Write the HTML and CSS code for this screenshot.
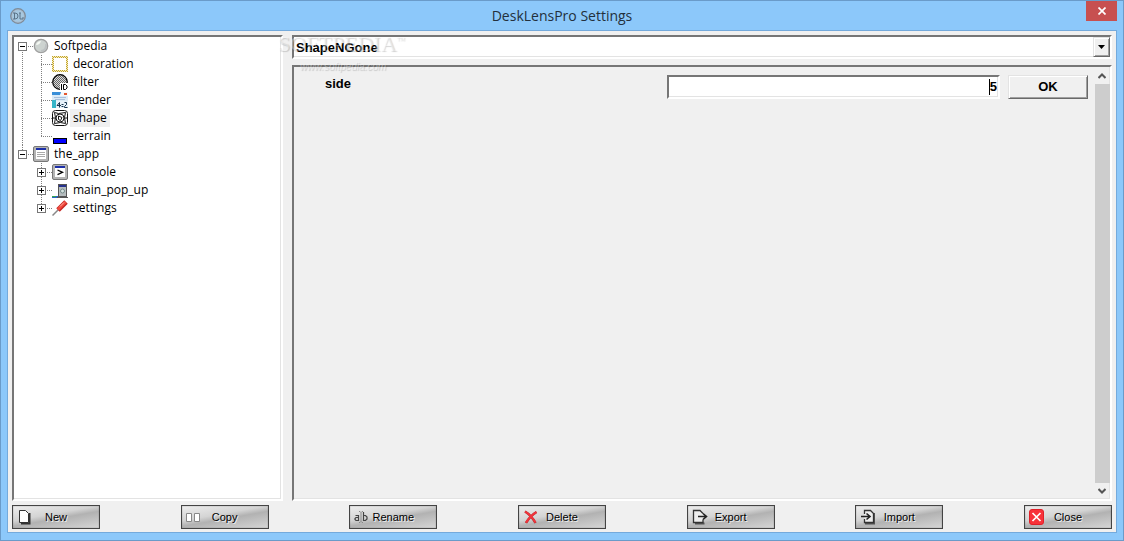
FILE: index.html
```html
<!DOCTYPE html>
<html lang="en">
<head>
  <meta charset="UTF-8">
  <title>DeskLensPro Settings</title>
  <link rel="stylesheet" href="styles.css">
</head>
<body>

  <div class="window">
    <header class="titlebar">
      <svg class="app-icon" viewBox="0 0 16 16">
        <circle cx="8" cy="8" r="7.3" fill="#a9bdd0" stroke="#7e8b98" stroke-width="1.3"/>
        <circle cx="8" cy="8" r="5.8" fill="#a6c8e0"/>
        <path d="M3 5h2q3 0 3 3t-3 3H3M4.500 5v6M9 5h2M10 5v6h3v-2" fill="none" stroke="#5b7388"/>
      </svg>
      <h1>DeskLensPro Settings</h1>
      <button class="window-close" type="button" aria-label="Close window">
        <svg width="8" height="8" viewBox="0 0 8 8"><path d="M0.500 0.500l7 7M7.500 0.500l-7 7" stroke="#fff" stroke-width="1.7"/></svg>
      </button>
    </header>

    <main class="client">
      <div class="panes">
        <nav class="tree sunken">
          <ul>
            <li>
              <div class="row">
                <span class="joint"><button class="expander open" type="button" aria-label="Collapse Softpedia"></button></span>
                <svg class="icon" viewBox="0 0 16 16">
                  <circle cx="8" cy="8" r="6.700" fill="#cdd3d0" stroke="#a0a0a0" stroke-width="1.300"/>
                  <path d="M3 7q1-4 5-4-1 4-5 4" fill="#f4f8f2"/>
                  <path d="M13 6q1 6-5 7" fill="none" stroke="#bdc1c2" stroke-width="2"/>
                </svg>
                <span class="name">Softpedia</span>
              </div>
              <ul>
                <li>
                  <div class="row">
                    <span class="joint"></span>
                    <svg class="icon" viewBox="0 0 16 16" shape-rendering="crispEdges">
                      <defs>
                        <pattern id="checker" width="2" height="2" patternUnits="userSpaceOnUse">
                          <path d="M0 0h2v2H0z" fill="#f6ecc0"/>
                          <path d="M0 0h1v1H0zM1 1h1v1H1z" fill="#c3a52c"/>
                        </pattern>
                      </defs>
                      <path d="M0 0h16v16H0z" fill="url(#checker)"/>
                      <path d="M2 2h12v12H2z" fill="#fff"/>
                    </svg>
                    <span class="name">decoration</span>
                  </div>
                </li>
                <li>
                  <div class="row">
                    <span class="joint"></span>
                    <svg class="icon" viewBox="0 0 16 16">
                      <defs>
                        <pattern id="dither" width="2" height="2" patternUnits="userSpaceOnUse">
                          <path d="M0 0h2v2H0z" fill="#ddd"/>
                          <path d="M0 0h1v1H0zM1 1h1v1H1z" fill="#666" shape-rendering="crispEdges"/>
                        </pattern>
                      </defs>
                      <circle cx="8" cy="8" r="7.300" fill="url(#dither)" stroke="#000" stroke-width="1.200"/>
                      <path d="M8 9h8v7H8z" fill="#fff"/>
                      <path d="M9.500 10v6M11.500 10.500h2l1.500 1.500v2l-1.500 1.500h-2z" fill="none" stroke="#000"/>
                    </svg>
                    <span class="name">filter</span>
                  </div>
                </li>
                <li>
                  <div class="row">
                    <span class="joint"></span>
                    <svg class="icon" viewBox="0 0 16 16">
                      <path d="M0 0h16v16H0z" fill="#dcebf7"/>
                      <path d="M0 0h10l-2 3H0z" fill="#3a8fd8"/>
                      <path d="M9 0h7v4h-8z" fill="#f5f9fc"/>
                      <path d="M12 1h3v2h-3z" fill="#e4572f"/>
                      <path d="M2 5.500h12M3 7.500h10" stroke="#a9c0dc"/>
                      <path d="M0 8h4v8H0z" fill="#35b5c9"/>
                      <path d="M4 9h12v7H4z" fill="#e8f2fa"/>
                      <path d="M7.500 15.500v-5l-2.500 3h4M9.500 12.500h2M9.500 14.500h2M12.500 10.500h2v2l-2 2v1h3" fill="none" stroke="#15334d"/>
                    </svg>
                    <span class="name">render</span>
                  </div>
                </li>
                <li>
                  <div class="row">
                    <span class="joint"></span>
                    <svg class="icon" viewBox="0 0 16 16" fill="none" stroke="#111">
                      <rect x="0.500" y="0.500" width="15" height="15" rx="3"/>
                      <path d="M2.500 2.500l4 1 7-1-1 5 1 6-5-1-6 1 1-6z"/>
                      <circle cx="8" cy="8" r="4"/>
                      <path d="M6.500 6l3.500 1.500-1.500 3-2-1zM0.500 8h3M12.500 8h3"/>
                    </svg>
                    <span class="name selected">shape</span>
                  </div>
                </li>
                <li>
                  <div class="row">
                    <span class="joint"></span>
                    <svg class="icon" viewBox="0 0 16 16">
                      <rect x="1.500" y="10.500" width="13" height="5" fill="#00f" stroke="#000"/>
                    </svg>
                    <span class="name">terrain</span>
                  </div>
                </li>
              </ul>
            </li>
            <li>
              <div class="row">
                <span class="joint"><button class="expander open" type="button" aria-label="Collapse the_app"></button></span>
                <svg class="icon" viewBox="0 0 16 16">
                  <rect x="0.500" y="0.500" width="15" height="15" rx="1.500" fill="#b4b4b4" stroke="#777"/>
                  <path d="M3 3h10v10H3z" fill="#fff"/>
                  <path d="M3 2h10v2H3z" fill="#1c2fa8"/>
                  <path d="M4 6.500h8M4 8.500h8M4 10.500h8" stroke="#aaa"/>
                </svg>
                <span class="name">the_app</span>
              </div>
              <ul>
                <li>
                  <div class="row">
                    <span class="joint"><button class="expander" type="button" aria-label="Expand console"></button></span>
                    <svg class="icon" viewBox="0 0 16 16">
                      <rect x="0.500" y="0.500" width="15" height="15" rx="1.500" fill="#b4b4b4" stroke="#777"/>
                      <path d="M3 3h10v10H3z" fill="#fff"/>
                      <path d="M3 2h10v2H3z" fill="#1c2fa8"/>
                      <path d="M5.500 6l5 2.300-5 2.300" fill="none" stroke="#000" stroke-width="1.300"/>
                    </svg>
                    <span class="name">console</span>
                  </div>
                </li>
                <li>
                  <div class="row">
                    <span class="joint"><button class="expander" type="button" aria-label="Expand main_pop_up"></button></span>
                    <svg class="icon" viewBox="0 0 16 16">
                      <path d="M0 14h8v2H0z" fill="#2a64c8"/>
                      <path d="M0 14.500h4" stroke="#37a84a"/>
                      <rect x="6.500" y="2.500" width="8" height="12" fill="#b5bcbe" stroke="#555"/>
                      <path d="M7 3h7v2H7z" fill="#26318c"/>
                      <circle cx="10.500" cy="9" r="2" fill="#d5e2e0" stroke="#738888"/>
                      <path d="M5 15.500h11" stroke="#555"/>
                    </svg>
                    <span class="name">main_pop_up</span>
                  </div>
                </li>
                <li>
                  <div class="row">
                    <span class="joint"><button class="expander" type="button" aria-label="Expand settings"></button></span>
                    <svg class="icon" viewBox="0 0 16 16">
                      <path d="M0.500 15.500L8 8" stroke="#888" stroke-width="1.500"/>
                      <path d="M6 10L14 2" stroke="#c42420" stroke-width="5"/>
                      <path d="M6 9.500L13.500 2" stroke="#f04a3e" stroke-width="3"/>
                      <path d="M8 6.500l4-4" stroke="#ffb0a4"/>
                    </svg>
                    <span class="name">settings</span>
                  </div>
                </li>
              </ul>
            </li>
          </ul>
        </nav>

        <section class="editor">
          <div class="combo sunken">
            <select aria-label="Shape type">
              <option>ShapeNGone</option>
            </select>
            <span class="combo-arrow"><svg width="7" height="4" viewBox="0 0 7 4"><path d="M0 0h7L3.500 4z"/></svg></span>
          </div>

          <div class="properties sunken">
            <form class="fields">
              <label for="side">side</label>
              <input class="sunken" type="text" id="side" value="5">
              <button class="ok" type="button">OK</button>
            </form>
            <div class="scrollbar">
              <svg width="8" height="6" viewBox="0 0 8 6"><path d="M0.500 5L4 1.500 7.500 5" fill="none" stroke="#555" stroke-width="2"/></svg>
              <div class="thumb"></div>
              <svg width="8" height="6" viewBox="0 0 8 6"><path d="M0.500 1L4 4.500 7.500 1" fill="none" stroke="#555" stroke-width="2"/></svg>
            </div>
          </div>

          <div class="watermark" aria-hidden="true">
            <span class="brand">SOFTPEDIA<sup>™</sup></span>
            <span class="site">www.softpedia.com</span>
          </div>
        </section>
      </div>

      <footer class="toolbar">
        <button type="button">
          <svg viewBox="0 0 16 16"><path d="M4 14.500h8.500V4" fill="none" stroke="#333" stroke-width="2"/><path d="M2.500 1.500h6l3 3v9h-9z" fill="#fff" stroke="#333"/></svg>
          <span>New</span>
        </button>
        <button type="button">
          <svg viewBox="0 0 16 16"><path d="M0.500 4.500h5v8h-5zM8.500 4.500h5v8h-5z" fill="#fff" stroke="#888"/></svg>
          <span>Copy</span>
        </button>
        <button type="button">
          <svg viewBox="0 0 16 16" fill="none" stroke="#444" stroke-width="1.200"><path d="M1.500 6.500h3V12M4 8.500H2L1 9.500v1l1 1h2.500M9.500 3v9M9.500 6.500h2l1.500 1.500v2l-1.500 1.500h-2"/><path d="M5 2.500h1l1 1 1-1h1M7 3.500v9M5 13.500h1l1-1 1 1h1" stroke="#888" stroke-width="1"/></svg>
          <span>Rename</span>
        </button>
        <button type="button">
          <svg viewBox="0 0 16 16"><path d="M2 2.500Q8 6 12.500 14M13.500 3Q7 7 3 14" fill="none" stroke="#b03030" stroke-width="2.500"/><path d="M2 2.500Q8 6 12.500 13.500M13.500 3Q7 7 3 13.500" fill="none" stroke="#f0343c" stroke-width="2"/></svg>
          <span>Delete</span>
        </button>
        <button type="button">
          <svg viewBox="0 0 16 16"><path d="M3 14.500h9.500" stroke="#555" stroke-width="2"/><path d="M11 4.500l-3-3H1.500v12h9.500v-3" fill="#eee" stroke="#333" stroke-width="1.300"/><path d="M6 7.500h8M11 4.500l3.500 3-3.500 3" fill="none" stroke="#222" stroke-width="1.600"/></svg>
          <span>Export</span>
        </button>
        <button type="button">
          <svg viewBox="0 0 16 16"><path d="M5 14.500h9V4" fill="none" stroke="#555" stroke-width="2"/><path d="M4.500 5V1.500h6l3 3v9h-9V10" fill="#eee" stroke="#333" stroke-width="1.300"/><path d="M1 7.500h8M6.500 4.500l3.500 3-3.500 3" fill="none" stroke="#222" stroke-width="1.600"/></svg>
          <span>Import</span>
        </button>
        <button type="button">
          <svg viewBox="0 0 16 16"><rect x="0.500" y="0.500" width="14" height="15" rx="2.500" fill="#f8323a" stroke="#e02028"/><path d="M3.500 4l8 8M11.500 4l-8 8" stroke="#fff" stroke-width="1.700"/></svg>
          <span>Close</span>
        </button>
      </footer>
    </main>
  </div>

</body>
</html>
```

FILE: styles.css
```css
* {
  box-sizing: border-box;
}
body {
  margin: 0;
  font-family: "Liberation Sans", Arial, sans-serif;
  font-size: 13px;
  color: #000;
}
button {
  padding: 0;
  font-family: inherit;
  color: inherit;
}
.window {
  display: flex;
  flex-direction: column;
  height: 100vh;
  padding: 0 6px 7px;
  background: #8cc8fa;
  border: 1px solid #6a9bc9;
}

/* title bar */
.titlebar {
  display: grid;
  grid-template-columns: 1fr auto 1fr;
  flex: 0 0 29px;
  align-items: center;
}
.titlebar h1 {
  margin: 0;
  font: 14px/20px "Open Sans", "Noto Sans", sans-serif;
  color: #23303c;
}
.app-icon {
  width: 16px;
  height: 16px;
  margin-left: 3px;
}
.window-close {
  display: flex;
  align-items: center;
  align-self: start;
  justify-content: center;
  justify-self: end;
  width: 31px;
  height: 20px;
  background: #c75050;
  border: 0;
}

.client {
  display: flex;
  flex: 1;
  flex-direction: column;
  gap: 4px;
  min-height: 0;
  padding: 4px 4px 3px;
  background: #f0f0f0;
  border: 1px solid #74aadc;
}
.panes {
  display: flex;
  flex: 1;
  gap: 9px;
  min-height: 0;
}
.sunken {
  border: 2px solid;
  border-color: #767676 #fff #fff #767676;
  box-shadow: inset -1px -1px #e3e3e3;
}

/* tree */
.tree {
  flex: 0 0 271px;
  background: #fff;
  font: 12px/18px "Open Sans", "Noto Sans", sans-serif;
}
.tree ul {
  margin: 0;
  padding: 0;
  list-style: none;
}
.tree ul ul {
  padding-left: 19px;
}
.tree li {
  background: repeating-linear-gradient(#808080 0 1px, transparent 1px 2px) 8px 0 / 1px 100% no-repeat;
}
.tree > ul > li:first-child {
  background-position: 8px 9px;
}
.tree li:last-child {
  background-size: 1px 9px;
}
.row {
  display: flex;
  align-items: center;
  height: 18px;
}
.joint {
  display: flex;
  align-items: center;
  width: 19px;
  height: 18px;
  padding-left: 4px;
  background: repeating-linear-gradient(90deg, #808080 0 1px, transparent 1px 2px) 8px 9px / 11px 1px no-repeat;
}
.expander {
  width: 9px;
  height: 9px;
  border: 1px solid #777;
  background:
    linear-gradient(#000, #000) center / 5px 1px no-repeat,
    linear-gradient(#000, #000) center / 1px 5px no-repeat,
    #fff;
}
.expander.open {
  background: linear-gradient(#000, #000) center / 5px 1px no-repeat, #fff;
}
.icon {
  width: 16px;
  height: 16px;
}
.name {
  margin-left: 2px;
  padding: 0 3px;
}
.name.selected {
  background: #f0f0f0;
}

/* editor */
.editor {
  position: relative;
  display: flex;
  flex: 1;
  flex-direction: column;
  gap: 6px;
  min-width: 0;
}
.combo {
  display: flex;
  height: 24px;
  background: #fff;
}
.combo select {
  flex: 1;
  padding: 0 2px;
  appearance: none;
  background: none;
  border: 0;
  font: bold 13px "Liberation Sans", Arial, sans-serif;
  color: #000;
}
.combo-arrow,
.ok {
  background: #f0f0f0;
  border: 1px solid;
  border-color: #e3e3e3 #696969 #696969 #e3e3e3;
  box-shadow: inset 1px 1px #fff, inset -1px -1px #a0a0a0;
}
.combo-arrow {
  display: flex;
  align-items: center;
  justify-content: center;
  width: 17px;
  pointer-events: none;
}
.properties {
  display: flex;
  flex: 1;
  min-height: 0;
}
.fields {
  display: grid;
  flex: 1;
  grid-template-columns: 1fr 1fr 80px;
  gap: 8px;
  align-content: start;
  padding: 8px 6px 8px 31px;
  font-weight: bold;
}
.fields label {
  line-height: 18px;
}
.fields input {
  min-width: 0;
  height: 24px;
  padding: 0 1px 2px;
  background: linear-gradient(#000, #000) right 8px center / 1px 16px no-repeat, #fff;
  font: bold 13px "Liberation Sans", Arial, sans-serif;
  text-align: right;
}
.ok {
  height: 24px;
  padding-bottom: 2px;
  font-size: 13px;
  font-weight: bold;
}
.scrollbar {
  display: flex;
  flex: 0 0 16px;
  flex-direction: column;
  gap: 5px;
  align-items: center;
  padding: 6px 0 5px;
}
.thumb {
  flex: 1;
  width: 15px;
  background: #cdcdcd;
}

/* faint logo across the combo box */
.watermark {
  position: absolute;
  top: 0;
  left: -14px;
  pointer-events: none;
  color: rgba(255, 255, 255, 0.4);
  text-shadow: 1px 1px 1px rgba(0, 0, 0, 0.18);
}
.watermark span {
  display: block;
}
.brand {
  font: 22px/18px "Liberation Serif", serif;
}
.brand sup {
  font-size: 9px;
  line-height: 9px;
}
.site {
  padding: 5px 0 0 22px;
  font: italic 10px/18px "Liberation Sans", sans-serif;
}

/* bottom buttons */
.toolbar {
  display: flex;
  justify-content: space-between;
}
.toolbar button {
  display: flex;
  align-items: center;
  width: 88px;
  height: 24px;
  padding: 0 20px 0 4px;
  background: linear-gradient(170deg, #eee 0, #d4d4d4 40%, #b2b2b2 55%, #d6d6d6 100%);
  border: 1px solid #444;
  box-shadow: inset 0 0 1px #555;
  font-size: 11px;
  text-shadow: 1px 1px #eee;
}
.toolbar svg {
  flex: 0 0 16px;
  height: 16px;
}
.toolbar span {
  flex: 1;
  text-align: center;
}
```
